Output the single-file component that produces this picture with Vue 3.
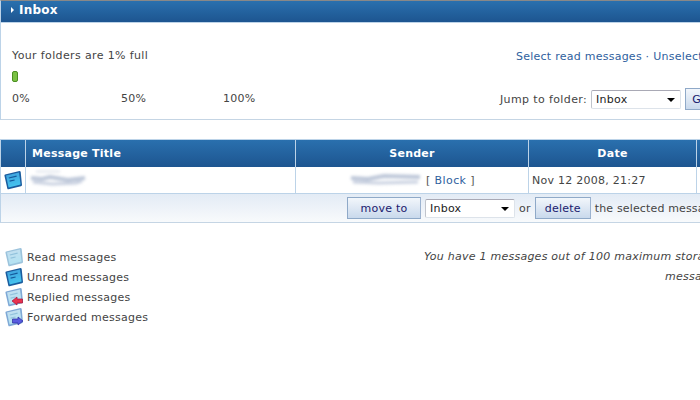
<script setup>
const legend = [
  { label: 'Read messages', kind: 'read' },
  { label: 'Unread messages', kind: 'unread' },
  { label: 'Replied messages', kind: 'replied' },
  { label: 'Forwarded messages', kind: 'forwarded' },
]
</script>

<template>
  <div class="page">
    <svg width="0" height="0" class="defs">
      <defs>
        <linearGradient id="unreadFill" x1="0" y1="0" x2="0.3" y2="1">
          <stop offset="0" stop-color="#3f9fdc"/>
          <stop offset="1" stop-color="#45c3ee"/>
        </linearGradient>
        <linearGradient id="readFill" x1="0" y1="0" x2="0.3" y2="1">
          <stop offset="0" stop-color="#c5dff0"/>
          <stop offset="1" stop-color="#b3e2f2"/>
        </linearGradient>
      </defs>
    </svg>
    <section class="panel">
      <h2 class="panel-title"><span class="caret"></span>Inbox</h2>
      <div class="panel-body">
        <div class="usage">
          <p class="usage-text">Your folders are 1% full</p>
          <div class="meter"></div>
          <div class="scale"><span class="s0">0%</span><span class="s1">50%</span><span>100%</span></div>
        </div>
        <div class="tools">
          <p class="links"><a>Select read messages</a> · <a>Unselect all</a></p>
          <div class="jump">
            <span class="jump-label">Jump to folder:</span>
            <div class="fake-select jump-select"><span>Inbox</span><i class="arrow"></i></div>
            <button class="btn go">Go</button>
          </div>
        </div>
      </div>
    </section>

    <section class="messages">
      <div class="row head">
        <div class="c-icon"></div>
        <div class="c-title">Message Title</div>
        <div class="c-sender">Sender</div>
        <div class="c-date">Date</div>
        <div class="c-rest"></div>
      </div>
      <div class="row body">
        <div class="c-icon">
          <svg class="icon" viewBox="0 0 18 20" width="18" height="20">
            <path d="M1 4.5 L15.5 1 Q16.5 1 16.7 2 L18 15 Q18 16 17 16.2 L4.5 19.3 Q3.6 19.4 3.3 18.4 L0.4 5.6 Q0.4 4.8 1 4.5 Z" fill="#1a5c9e"/>
            <path d="M2 5.6 L15 2.6 L16.6 14.6 L4.6 17.6 Z" fill="url(#unreadFill)"/>
            <path d="M4.8 8 L12.6 6.1 M5.6 11.2 L10.6 10" stroke="#155a9c" stroke-width="1.2"/>
          </svg>
        </div>
        <div class="c-title">
          <svg class="smear" width="62" height="20" viewBox="0 0 62 20">
            <path d="M8 1.5 H32" stroke="#d5dbe6" stroke-width="1.5"/>
            <path d="M3 8 L14 9 L22 7 L40 10 L57 8" stroke="#bcc6d8" stroke-width="4" fill="none"/>
            <path d="M5 12 L24 14 L48 13 L54 11" stroke="#c8d0e0" stroke-width="3" fill="none"/>
          </svg>
        </div>
        <div class="c-sender">
          <svg class="smear" width="74" height="20" viewBox="0 0 74 20">
            <path d="M3 8 L20 9 L36 6 L72 7" stroke="#bcc6d8" stroke-width="4" fill="none"/>
            <path d="M5 12 L30 13 L70 12" stroke="#c8d0e0" stroke-width="3" fill="none"/>
          </svg>
          <span class="block">[ <a>Block</a> ]</span>
        </div>
        <div class="c-date">Nov 12 2008, 21:27</div>
        <div class="c-rest"></div>
      </div>
      <div class="actions">
        <button class="btn move">move to</button>
        <div class="fake-select move-select"><span>Inbox</span><i class="arrow"></i></div>
        <span>or</span>
        <button class="btn del">delete</button>
        <span class="selected">the selected messages</span>
      </div>
    </section>

    <section class="bottom">
      <ul class="legend">
        <li v-for="item in legend" :key="item.label">
          <svg class="icon" viewBox="0 0 18 20" width="18" height="20">
            <template v-if="item.kind === 'unread'">
              <path d="M1 4.5 L15.5 1 Q16.5 1 16.7 2 L18 15 Q18 16 17 16.2 L4.5 19.3 Q3.6 19.4 3.3 18.4 L0.4 5.6 Q0.4 4.8 1 4.5 Z" fill="#1a5c9e"/>
              <path d="M2 5.6 L15 2.6 L16.6 14.6 L4.6 17.6 Z" fill="url(#unreadFill)"/>
              <path d="M4.8 8 L12.6 6.1 M5.6 11.2 L10.6 10" stroke="#155a9c" stroke-width="1.2"/>
            </template>
            <template v-else>
              <path d="M1 4.5 L15.5 1 Q16.5 1 16.7 2 L18 15 Q18 16 17 16.2 L4.5 19.3 Q3.6 19.4 3.3 18.4 L0.4 5.6 Q0.4 4.8 1 4.5 Z" :fill="item.kind === 'read' ? '#9cc3dc' : '#7fa9d6'"/>
              <path d="M2 5.6 L15 2.6 L16.6 14.6 L4.6 17.6 Z" fill="url(#readFill)"/>
              <path d="M4.8 8 L12.6 6.1 M5.6 11.2 L10.6 10" stroke="#92c2dc" stroke-width="1.2"/>
            </template>
            <path v-if="item.kind === 'replied'" d="M7 14 L12 10 V12 H17.5 V16 H12 V18 Z" fill="#e8334f" stroke="#a8123a" stroke-width=".7"/>
            <path v-if="item.kind === 'forwarded'" d="M18 14 L13 10 V12 H7.5 V16 H13 V18 Z" fill="#5a5ce0" stroke="#2a2a9e" stroke-width=".7"/>
          </svg>
          <span>{{ item.label }}</span>
        </li>
      </ul>
      <div class="note">
        <p>You have 1 messages out of 100 maximum storage</p>
        <p>messages</p>
      </div>
    </section>
  </div>
</template>

<style>
html, body { margin: 0; overflow: hidden; background: #fff; }
</style>

<style scoped>
.page {
  width: 780px;
  height: 400px;
  overflow: hidden;
  font: 11px "DejaVu Sans", Verdana, sans-serif;
  letter-spacing: 0.25px;
  color: #444;
}
.defs { position: absolute; }
.icon { filter: blur(0.35px); flex: none; }
p { margin: 0; }
a { color: #2f5f9e; }

.panel {
  border-top: 1px solid #888;
  border-left: 1px solid #bcd3e8;
  border-bottom: 1px solid #c5d5e4;
  height: 118px;
}
.panel-title {
  margin: 0;
  height: 21px;
  line-height: 19px;
  font-size: 12px;
  letter-spacing: 0.2px;
  font-weight: bold;
  color: #fff;
  background: linear-gradient(#2a70ae, #1d5590);
  display: flex;
  align-items: flex-start;
  padding-left: 10px;
  border-bottom: 1px solid #bcd3e8;
}
.caret {
  width: 0; height: 0;
  border-left: 3px solid #fff;
  border-top: 3px solid transparent;
  border-bottom: 3px solid transparent;
  margin: 6px 5px 0 0;
}
.panel-body {
  display: flex;
  justify-content: space-between;
  padding: 0 0 0 11px;
}
.usage { width: 400px; padding-top: 26px; }
.usage-text { line-height: 14px; letter-spacing: 0.37px; }
.meter {
  width: 4px; height: 9px;
  margin: 8px 0 0 0;
  background: #7ac143;
  border: 1px solid #4b8f22;
  border-radius: 2px;
}
.scale { display: flex; margin-top: 10px; line-height: 14px; }
.s0 { width: 109px; }
.s1 { width: 102px; }

.tools { width: 264px; padding-top: 27px; }
.links { color: #2f5f9e; line-height: 14px; white-space: nowrap; }
.jump { display: flex; align-items: center; gap: 4px; margin-top: 25px; margin-left: -16px; height: 20px; white-space: nowrap; }
.jump-label { letter-spacing: 0.38px; }

.fake-select {
  box-sizing: border-box;
  height: 19px;
  background: #fff;
  border: 1px solid #dde3ea;
  border-top-color: #a9a9b5;
  border-left-color: #c0c4cc;
  border-radius: 2px;
  display: flex;
  align-items: center;
  justify-content: space-between;
  padding: 0 5px 0 4px;
  color: #222;
}
.jump-select { width: 90px; }
.move-select { width: 90px; }
.arrow { width: 0; height: 0; border-top: 4px solid #000; border-left: 4px solid transparent; border-right: 4px solid transparent; margin-top: 2px; }

.btn {
  box-sizing: border-box;
  font: 11px "DejaVu Sans", Verdana, sans-serif;
  letter-spacing: 0.25px;
  color: #1a1a6e;
  height: 22px;
  padding: 0;
  background: linear-gradient(#f2f6fb, #c9d9ec);
  border: 1px solid #8fa9c8;
  border-right-color: #9bb2cf;
}
.go { width: 30px; }
.move { width: 74px; }
.del { width: 56px; }

.messages {
  margin-top: 19px;
  border-top: 1px solid #bcd3e8;
}
.row { display: flex; border-left: 1px solid #bcd3e8; }
.row > div { box-sizing: border-box; border-right: 1px solid #bcd3e8; }
.head {
  height: 27px;
  background: linear-gradient(#2a70ae, #1d5590);
  color: #fff;
  font-weight: bold;
  line-height: 27px;
}
.body {
  height: 27px;
  border-bottom: 1px solid #bcd3e8;
  line-height: 27px;
  box-sizing: border-box;
}
.c-icon { width: 25px; flex: none; display: flex; align-items: center; padding-left: 3px; }
.c-title { width: 270px; flex: none; padding-left: 6px; }
.c-sender { width: 233px; flex: none; text-align: center; white-space: nowrap; }
.c-date { width: 168px; flex: none; }
.head .c-date { text-align: center; }
.body .c-date { padding-left: 3px; }
.c-rest { flex: 1; border-right: 0 !important; }
.body .c-title { display: flex; align-items: center; padding-left: 0; }
.body .c-sender { display: flex; align-items: center; padding-left: 52px; }
.block { color: #555; margin-left: 4px; letter-spacing: 0.4px; }
.smear { filter: blur(1.4px); flex: none; }
.c-title .smear { margin-left: 2px; }

.actions {
  height: 29px;
  box-sizing: border-box;
  border-left: 1px solid #bcd3e8;
  border-bottom: 1px solid #c5d5e4;
  background: linear-gradient(#e3ebf5, #f8fafc);
  display: flex;
  align-items: center;
  gap: 4px;
  padding-left: 346px;
  white-space: nowrap;
}
.selected { letter-spacing: 0.15px; }

.bottom {
  display: flex;
  justify-content: space-between;
  margin-top: 24px;
}
.legend { list-style: none; margin: 0; padding: 0 0 0 5px; }
.legend li { height: 20px; display: flex; align-items: center; gap: 4px; }
.note {
  width: 356px;
  font-style: italic;
  white-space: nowrap;
  line-height: 20px;
}
.note p + p { padding-left: 241px; }
</style>
